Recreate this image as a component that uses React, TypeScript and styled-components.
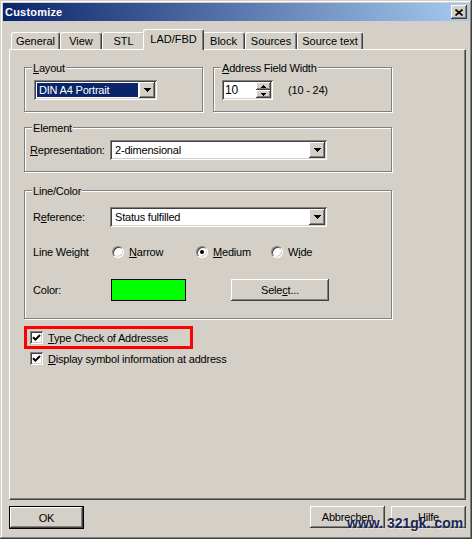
import styled, { createGlobalStyle, css } from 'styled-components';

const GlobalStyle = createGlobalStyle`
  html, body {
    margin: 0;
    padding: 0;
    background: #d4d0c8;
  }
  body {
    font-family: "Liberation Sans", Arial, sans-serif;
    font-size: 11px;
    letter-spacing: -0.2px;
    color: #000;
  }
`;

const raised = css`
  box-shadow: inset -1px -1px #404040, inset 1px 1px #fff, inset -2px -2px #808080;
`;

const sunken = css`
  box-shadow: inset 1px 1px #808080, inset -1px -1px #fff, inset 2px 2px #404040,
    inset -2px -2px #d4d0c8;
`;

const Window = styled.div`
  position: relative;
  width: 472px;
  height: 539px;
  box-sizing: border-box;
  padding: 3px;
  background: #d4d0c8;
  box-shadow: inset -1px -1px #404040, inset 1px 1px #d4d0c8, inset -2px -2px #808080,
    inset 2px 2px #fff;
  display: flex;
  flex-direction: column;
`;

const TitleBar = styled.div`
  height: 18px;
  display: flex;
  align-items: center;
  justify-content: space-between;
  padding: 0 2px 0 2px;
  background: linear-gradient(90deg, #0a246a 0%, #a6caf0 100%);
`;

const Title = styled.span`
  color: #fff;
  font-weight: bold;
  font-size: 11px;
  letter-spacing: 0.2px;
`;

const CloseButton = styled.div`
  width: 16px;
  height: 14px;
  background: #d4d0c8;
  ${raised};
  display: flex;
  align-items: center;
  justify-content: center;
`;

const Content = styled.div`
  flex: 1;
  display: flex;
  flex-direction: column;
  padding: 8px 3px 0 6px;
`;

const TabStrip = styled.div`
  display: flex;
  align-items: flex-end;
  height: 20px;
  padding-left: 2px;
`;

const Tab = styled.div<{ $w: number; $active?: boolean }>`
  position: relative;
  z-index: ${(p) => (p.$active ? 1 : 0)};
  box-sizing: border-box;
  width: ${(p) => (p.$active ? p.$w + 4 : p.$w)}px;
  height: ${(p) => (p.$active ? 21 : 17)}px;
  margin: ${(p) => (p.$active ? '0 -2px -1px' : '0')};
  padding-bottom: ${(p) => (p.$active ? 3 : 0)}px;
  letter-spacing: 0;
  background: #d4d0c8;
  border-top: 1px solid #fff;
  border-left: 1px solid #fff;
  border-right: 1px solid #404040;
  border-radius: 3px 3px 0 0;
  box-shadow: inset -1px 0 #808080;
  display: flex;
  align-items: center;
  justify-content: center;
`;

const Panel = styled.div`
  flex: 1;
  box-sizing: border-box;
  border: 1px solid;
  border-color: #fff #404040 #404040 #fff;
  box-shadow: inset -1px -1px #808080;
  padding: 17px 0 0 14px;
  display: flex;
  flex-direction: column;
  align-items: flex-start;
`;

const GroupRow = styled.div`
  display: flex;
  gap: 10px;
`;

const GroupBox = styled.div<{ $w: number; $mt?: number; $pad: string }>`
  position: relative;
  box-sizing: border-box;
  width: ${(p) => p.$w}px;
  margin-top: ${(p) => p.$mt ?? 0}px;
  padding: ${(p) => p.$pad};
  border: 1px solid #808080;
  box-shadow: inset 1px 1px #fff, 1px 1px #fff;
`;

const Caption = styled.span`
  position: absolute;
  top: -6px;
  left: 7px;
  padding: 0 1px;
  line-height: 13px;
  background: #d4d0c8;
`;

const Key = styled.span`
  text-decoration: underline;
  text-underline-offset: 1px;
`;

const Combo = styled.div<{ $w: number }>`
  box-sizing: border-box;
  width: ${(p) => p.$w}px;
  height: 20px;
  padding: 2px;
  background: #fff;
  ${sunken};
  display: flex;
`;

const ComboText = styled.div<{ $selected?: boolean }>`
  flex: 1;
  margin: 1px;
  padding-left: 2px;
  line-height: 14px;
  background: ${(p) => (p.$selected ? '#0a246a' : 'transparent')};
  color: ${(p) => (p.$selected ? '#fff' : '#000')};
`;

const DropButton = styled.div`
  width: 16px;
  background: #d4d0c8;
  ${raised};
  display: flex;
  align-items: center;
  justify-content: center;
`;

const Spinner = styled.div`
  box-sizing: border-box;
  width: 51px;
  height: 20px;
  padding: 2px;
  background: #fff;
  ${sunken};
  display: flex;
`;

const SpinValue = styled.div`
  flex: 1;
  padding-left: 1px;
  line-height: 16px;
  font-size: 12px;
`;

const SpinButtons = styled.div`
  width: 15px;
  display: flex;
  flex-direction: column;
`;

const SpinButton = styled.div`
  flex: 1;
  background: #d4d0c8;
  ${raised};
  display: flex;
  align-items: center;
  justify-content: center;
`;

const Inline = styled.div<{ $gap: number }>`
  display: flex;
  align-items: center;
  gap: ${(p) => p.$gap}px;
`;

const FormRow = styled.div<{ $label: number; $h: number; $mt?: number }>`
  display: grid;
  grid-template-columns: ${(p) => p.$label}px auto;
  align-items: center;
  height: ${(p) => p.$h}px;
  margin-top: ${(p) => p.$mt ?? 0}px;
`;

const RadioGroup = styled.div`
  display: flex;
  padding-left: 2px;
`;

const RadioItem = styled.label<{ $w?: number }>`
  display: flex;
  align-items: center;
  gap: 5px;
  width: ${(p) => (p.$w ? `${p.$w}px` : 'auto')};
`;

const RadioCircle = styled.span<{ $checked?: boolean }>`
  position: relative;
  box-sizing: border-box;
  width: 12px;
  height: 12px;
  border-radius: 50%;
  background: #fff;
  border: 1px solid;
  border-color: #808080 #fff #fff #808080;
  box-shadow: inset 1px 1px #404040, inset -1px -1px #d4d0c8;

  &::after {
    content: '';
    display: ${(p) => (p.$checked ? 'block' : 'none')};
    position: absolute;
    left: 3px;
    top: 3px;
    width: 4px;
    height: 4px;
    border-radius: 50%;
    background: #000;
  }
`;

const Swatch = styled.div`
  box-sizing: border-box;
  width: 75px;
  height: 22px;
  margin-left: 1px;
  background: #00ff00;
  border: 1px solid #000;
`;

const Button = styled.div<{ $w: number; $default?: boolean }>`
  box-sizing: border-box;
  width: ${(p) => p.$w}px;
  height: ${(p) => (p.$default ? 23 : 22)}px;
  background: #d4d0c8;
  display: flex;
  align-items: center;
  justify-content: center;
  ${(p) =>
    p.$default
      ? css`
          box-shadow: inset 0 0 0 1px #000, inset -2px -2px #404040, inset 2px 2px #fff,
            inset -3px -3px #808080;
        `
      : raised};
`;

const ColorRow = styled.div`
  display: flex;
  align-items: center;
  gap: 45px;
`;

const Highlight = styled.div`
  box-sizing: border-box;
  width: 169px;
  height: 23px;
  margin-top: 7px;
  padding-left: 3px;
  border: 3px solid #ff0000;
  display: flex;
  align-items: center;
`;

const CheckRow = styled.div<{ $pl: number; $mt?: number }>`
  display: flex;
  align-items: center;
  gap: 5px;
  height: 15px;
  padding-left: ${(p) => p.$pl}px;
  margin-top: ${(p) => p.$mt ?? 0}px;
`;

const CheckBox = styled.span`
  box-sizing: border-box;
  width: 13px;
  height: 13px;
  background: #fff;
  ${sunken};
  display: flex;
  align-items: center;
  justify-content: center;
`;

const ButtonBar = styled.div`
  display: flex;
  justify-content: space-between;
  align-items: flex-start;
  height: 23px;
  margin: 6px 0 7px;
`;

const ButtonGroup = styled.div`
  display: flex;
  gap: 6px;
`;

const Watermark = styled.div`
  position: absolute;
  left: 347px;
  top: 516px;
  font-family: "Liberation Sans", Arial, sans-serif;
  font-weight: bold;
  font-size: 14px;
  line-height: 15px;
  letter-spacing: 0;
  color: #1a2756;
  text-shadow: 1px 1px 0 rgba(255, 255, 255, 0.5);
  white-space: nowrap;
`;

const Arrow = () => (
  <svg width="7" height="4" viewBox="0 0 7 4" shapeRendering="crispEdges">
    <polygon points="0,0 7,0 3.5,4" fill="#000" />
  </svg>
);

const SmallArrow = ({ up }: { up?: boolean }) => (
  <svg width="5" height="3" viewBox="0 0 5 3" shapeRendering="crispEdges">
    <polygon points={up ? '2.5,0 5,3 0,3' : '0,0 5,0 2.5,3'} fill="#000" />
  </svg>
);

const Check = () => (
  <svg width="9" height="9" viewBox="0 0 9 9">
    <path d="M1 4.2 L3.4 6.6 L8 2" fill="none" stroke="#000" strokeWidth="2" />
  </svg>
);

const CloseGlyph = () => (
  <svg width="8" height="7" viewBox="0 0 8 7">
    <path d="M0.5 0.5 L7.5 6.5 M7.5 0.5 L0.5 6.5" stroke="#000" strokeWidth="1.6" />
  </svg>
);

const tabs = [
  { label: 'General', w: 49 },
  { label: 'View', w: 42 },
  { label: 'STL', w: 43 },
  { label: 'LAD/FBD', w: 57, active: true },
  { label: 'Block', w: 43 },
  { label: 'Sources', w: 52 },
  { label: 'Source text', w: 66 },
];

const App = () => {
  return (
    <>
      <GlobalStyle />
      <Window>
        <TitleBar>
          <Title>Customize</Title>
          <CloseButton>
            <CloseGlyph />
          </CloseButton>
        </TitleBar>

        <Content>
          <TabStrip>
            {tabs.map((t) => (
              <Tab key={t.label} $w={t.w} $active={t.active}>
                {t.label}
              </Tab>
            ))}
          </TabStrip>

          <Panel>
            <GroupRow>
              <GroupBox $w={179} $pad="12px 0 11px 9px">
                <Caption>
                  <Key>L</Key>ayout
                </Caption>
                <Combo $w={123}>
                  <ComboText $selected>DIN A4 Portrait</ComboText>
                  <DropButton>
                    <Arrow />
                  </DropButton>
                </Combo>
              </GroupBox>

              <GroupBox $w={179} $pad="12px 0 11px 8px">
                <Caption>
                  <Key>A</Key>ddress Field Width
                </Caption>
                <Inline $gap={15}>
                  <Spinner>
                    <SpinValue>10</SpinValue>
                    <SpinButtons>
                      <SpinButton>
                        <SmallArrow up />
                      </SpinButton>
                      <SpinButton>
                        <SmallArrow />
                      </SpinButton>
                    </SpinButtons>
                  </Spinner>
                  <span>(10 - 24)</span>
                </Inline>
              </GroupBox>
            </GroupRow>

            <GroupBox $w={368} $mt={15} $pad="12px 0 11px 5px">
              <Caption>Element</Caption>
              <FormRow $label={80} $h={20}>
                <span>
                  <Key>R</Key>epresentation:
                </span>
                <Combo $w={217}>
                  <ComboText>2-dimensional</ComboText>
                  <DropButton>
                    <Arrow />
                  </DropButton>
                </Combo>
              </FormRow>
            </GroupBox>

            <GroupBox $w={368} $mt={18} $pad="16px 0 17px 8px">
              <Caption>Line/Color</Caption>
              <FormRow $label={77} $h={20}>
                <span>
                  R<Key>e</Key>ference:
                </span>
                <Combo $w={217}>
                  <ComboText>Status fulfilled</ComboText>
                  <DropButton>
                    <Arrow />
                  </DropButton>
                </Combo>
              </FormRow>
              <FormRow $label={77} $h={20} $mt={15}>
                <span>Line Weight</span>
                <RadioGroup>
                  <RadioItem $w={84}>
                    <RadioCircle />
                    <span>
                      <Key>N</Key>arrow
                    </span>
                  </RadioItem>
                  <RadioItem $w={75}>
                    <RadioCircle $checked />
                    <span>
                      <Key>M</Key>edium
                    </span>
                  </RadioItem>
                  <RadioItem>
                    <RadioCircle />
                    <span>
                      W<Key>i</Key>de
                    </span>
                  </RadioItem>
                </RadioGroup>
              </FormRow>
              <FormRow $label={77} $h={22} $mt={17}>
                <span>Color:</span>
                <ColorRow>
                  <Swatch />
                  <Button $w={98}>
                    <span>
                      Sele<Key>c</Key>t...
                    </span>
                  </Button>
                </ColorRow>
              </FormRow>
            </GroupBox>

            <Highlight>
              <CheckRow $pl={0}>
                <CheckBox>
                  <Check />
                </CheckBox>
                <span>
                  <Key>T</Key>ype Check of Addresses
                </span>
              </CheckRow>
            </Highlight>
            <CheckRow $pl={6} $mt={2}>
              <CheckBox>
                <Check />
              </CheckBox>
              <span>
                <Key>D</Key>isplay symbol information at address
              </span>
            </CheckRow>
          </Panel>

          <ButtonBar>
            <Button $w={75} $default>
              OK
            </Button>
            <ButtonGroup>
              <Button $w={75}>Abbrechen</Button>
              <Button $w={75}>Hilfe</Button>
            </ButtonGroup>
          </ButtonBar>
        </Content>

        <Watermark>www. 321gk. com</Watermark>
      </Window>
    </>
  );
};

export default App;
